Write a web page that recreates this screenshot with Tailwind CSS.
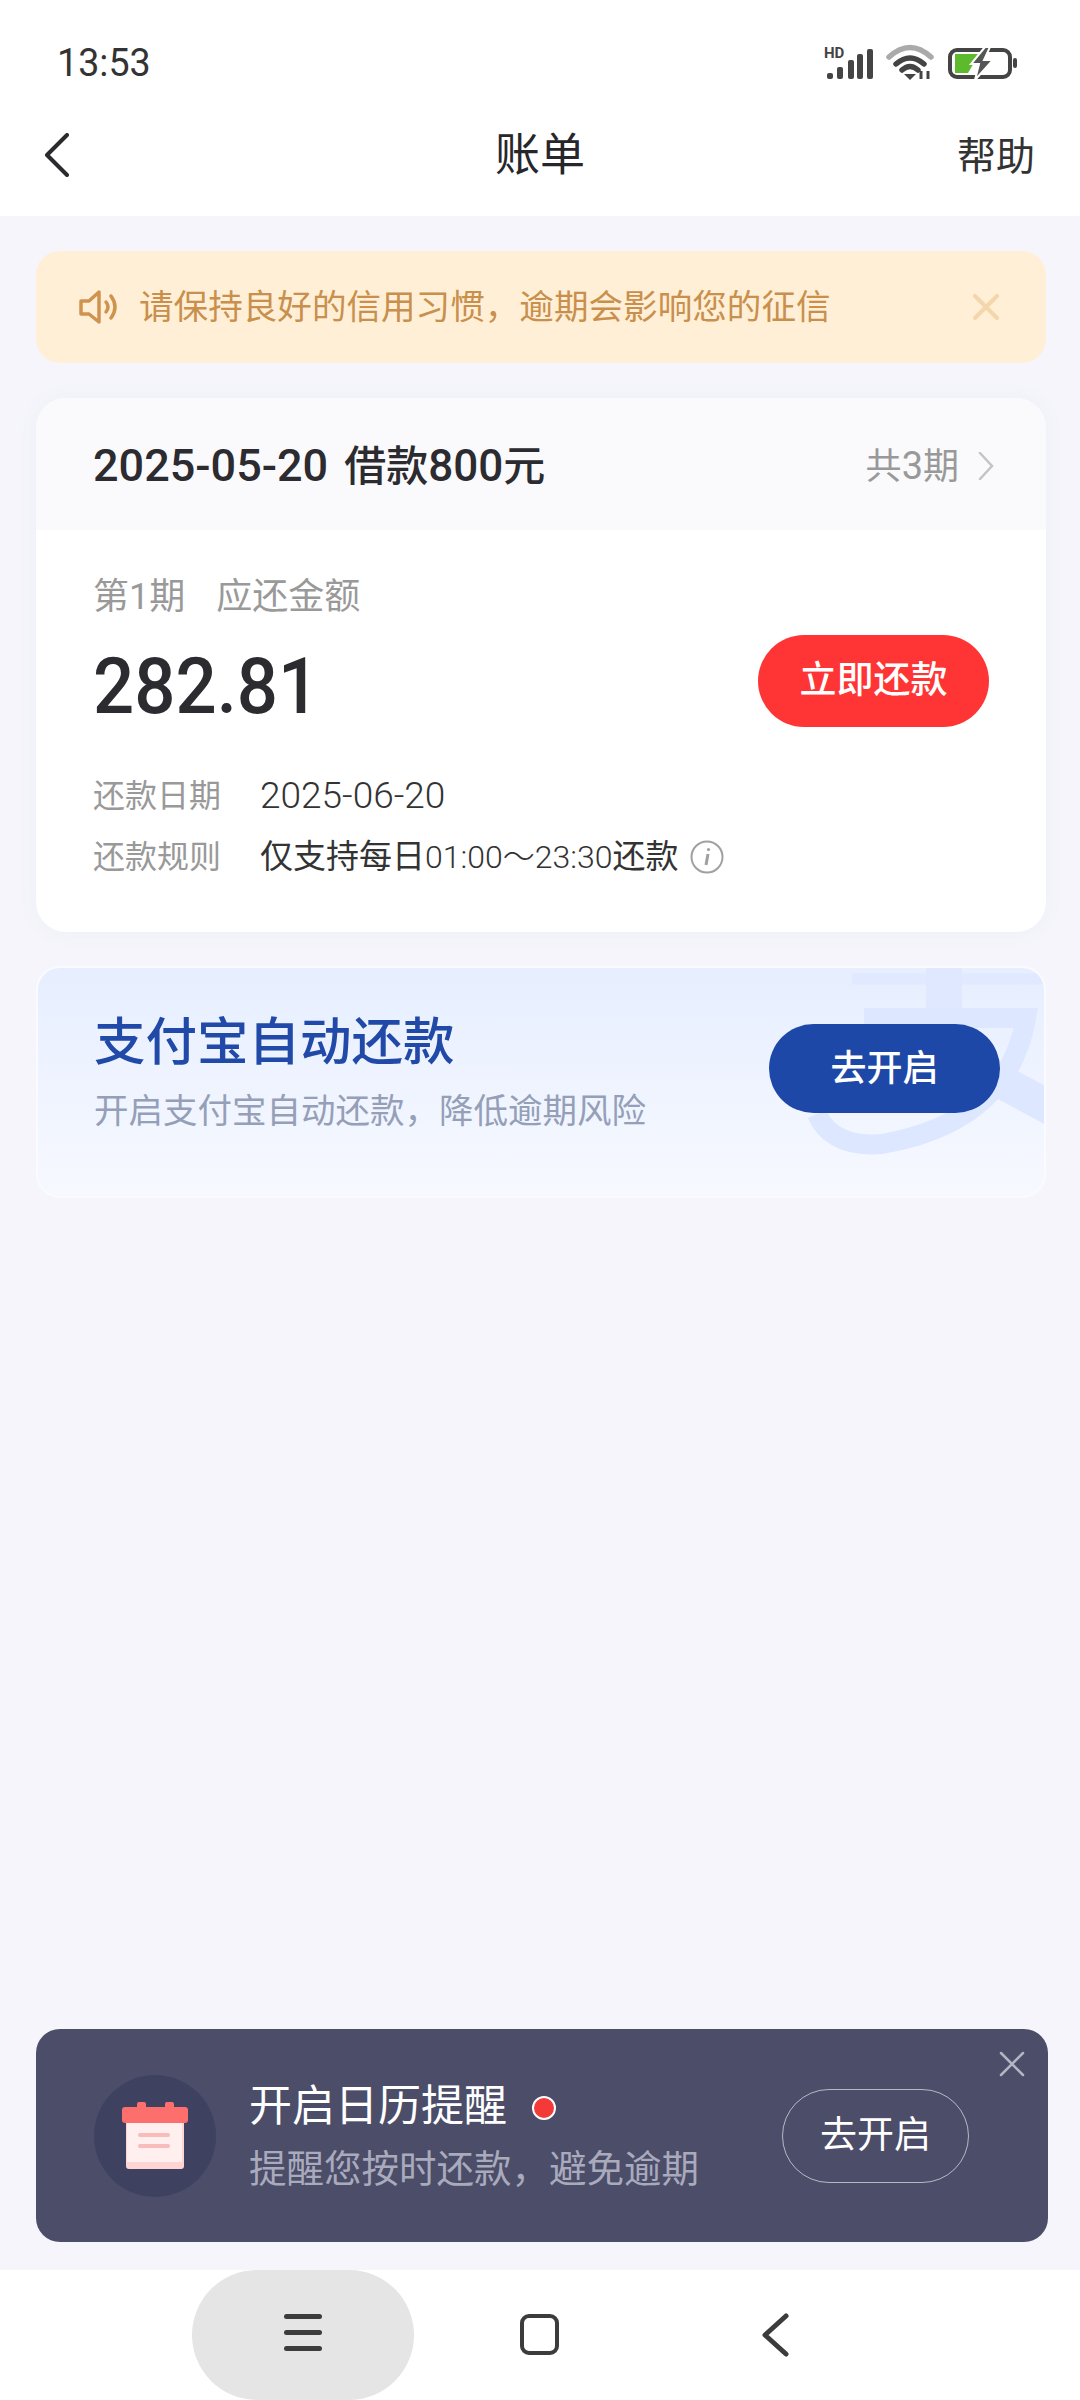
<!DOCTYPE html>
<html lang="zh-CN">
<head>
  <meta charset="UTF-8" />
  <meta name="viewport" content="width=device-width, initial-scale=1.0" />
  <title>账单</title>
  <script src="https://cdn.jsdelivr.net/npm/@tailwindcss/browser@4"></script>
</head>
<body class="bg-[#f5f5fb] font-['Roboto','Noto_Sans_CJK_SC',sans-serif]">
<div class="w-[1080px] h-[2400px] flex flex-col overflow-hidden">

  <!-- Status bar + title -->
  <header class="bg-white h-[216px] shrink-0">
    <div class="h-[100px] pl-[57px] pr-[62px] pt-[40px] flex justify-between items-start">
      <span class="text-[38px] leading-[46px] text-[#333] scale-x-[0.99] origin-left">13:53</span>
      <svg class="mt-[4px]" width="194" height="39" viewBox="824 44 194 39">
        <text x="824" y="58" font-size="15" font-weight="700" fill="#444" font-family="Roboto">HD</text>
        <g fill="#444">
          <rect x="827" y="73" width="6" height="6" rx="2" />
          <rect x="837" y="67" width="6" height="12" rx="2" />
          <rect x="848" y="60" width="6" height="19" rx="2" />
          <rect x="857" y="54" width="6" height="25" rx="2" />
          <rect x="867" y="49" width="6" height="30" rx="2" />
        </g>
        <g fill="none" stroke-linecap="round" stroke-width="5.5">
          <path d="M889 57 Q910 38 931 57" stroke="#aaa" />
          <path d="M896 64 Q910 52 924 64" stroke="#444" />
          <path d="M902 70 Q910 63 918 70" stroke="#444" />
        </g>
        <path d="M904 74 L916 74 L910 80 Z" fill="#444" />
        <path d="M921 71 V79 M928 71 V79" stroke="#444" stroke-width="3" />
        <rect x="950" y="50" width="60" height="27" rx="7" fill="none" stroke="#444" stroke-width="4" />
        <path d="M955 54 H979 L968 73 H955 Z" fill="#5cba2c" />
        <path d="M985 47 L971 64 H979 L975 80 L993 60 H984 L990 47 Z" fill="#555" stroke="#fff" stroke-width="2" />
        <rect x="1013" y="58" width="4" height="10" rx="2" fill="#444" />
      </svg>
    </div>
    <nav class="relative h-[116px] flex items-start justify-between pl-[44px] pr-[45px] pt-[12px]">
      <svg class="mt-[21px]" width="26" height="44" viewBox="0 0 26 44" fill="none" stroke="#2a2a2f" stroke-width="4" stroke-linecap="round" stroke-linejoin="round"><path d="M23 2 L3 22 L23 42" /></svg>
      <h1 class="absolute left-0 right-0 top-[24px] text-center text-[45px] leading-[64px] text-[#26262b]">账单</h1>
      <span class="mt-[15px] text-[39px] leading-[60px] text-[#333]">帮助</span>
    </nav>
  </header>

  <main class="flex-1 pl-[36px] pr-[34px] pt-[35px] flex flex-col gap-[35px]">
    <!-- Notice -->
    <div class="h-[112px] rounded-[24px] bg-[#ffefd6] flex items-center pl-[43px] pr-[46px] text-[#c98f4d]">
      <svg width="40" height="34" viewBox="0 0 40 34" fill="none" stroke="#cf9350" stroke-width="3.5" stroke-linejoin="round" stroke-linecap="round">
        <path d="M2 11 H10 L20 2 V32 L10 24 H2 Z" />
        <path d="M27 12 Q31 17 27 22" />
        <path d="M32 6 Q40 17 32 28" />
      </svg>
      <span class="ml-[20px] text-[34.6px] leading-[44px] flex-1 whitespace-nowrap">请保持良好的信用习惯，逾期会影响您的征信</span>
      <svg width="28" height="26" viewBox="0 0 28 26" fill="none" stroke="#f4d6aa" stroke-width="4" stroke-linecap="round"><path d="M3 2 L25 24 M25 2 L3 24" /></svg>
    </div>

    <!-- Bill card -->
    <section class="h-[534px] rounded-[30px] bg-white overflow-hidden shadow-[0_0_20px_rgba(120,120,170,0.05)]">
      <div class="h-[132px] bg-[#fafafd] pl-[57px] pr-[52px] pt-[4px] flex items-center justify-between">
        <h2 class="text-[42px] leading-[60px] font-medium text-[#2b2b30] whitespace-nowrap"><span class="text-[45px]">2025-05-20</span><span class="ml-[16px]">借款</span><span class="text-[44px]">800</span>元</h2>
        <div class="flex items-center gap-[19px] text-[36px] leading-[50px] text-[#999]">
          <span>共<span class="text-[38px]">3</span>期</span>
          <svg width="16" height="28" viewBox="0 0 16 28" fill="none" stroke="#c4c4c8" stroke-width="2.5" stroke-linecap="round"><path d="M2 1 L14 14 L2 27" /></svg>
        </div>
      </div>
      <div class="relative pl-[57px] pt-[42px]">
        <div class="text-[36px] leading-[50px] text-[#999] whitespace-pre">第<span>1</span>期<span class="ml-[31px]">应还金额</span></div>
        <div class="mt-[20px] text-[78px] leading-[90px] font-medium text-[#2b2b30] scale-x-[0.93] origin-left">282.81</div>
        <button class="absolute left-[722px] top-[105px] w-[231px] h-[92px] rounded-full bg-[#ff3535] text-white text-[37px] font-medium">立即还款</button>
        <div class="mt-[44px] flex items-center h-[40px]">
          <span class="w-[167px] text-[32px] text-[#999]">还款日期</span>
          <span class="text-[37px] font-light text-[#333]">2025-06-20</span>
        </div>
        <div class="mt-[21px] flex items-center h-[40px]">
          <span class="w-[167px] text-[32px] text-[#999]">还款规则</span>
          <span class="text-[33px] text-[#333] whitespace-nowrap">仅支持每日<span class="text-[32px] font-light">01:00～23:30</span>还款</span>
          <svg class="ml-[12px]" width="34" height="34" viewBox="0 0 34 34" fill="none" stroke="#a0a0a4" stroke-width="2"><circle cx="17" cy="17" r="15.5" /><path d="M18 14 L16 25" stroke-width="3" /><circle cx="18.5" cy="9.5" r="1.6" fill="#a0a0a4" stroke="none" /></svg>
        </div>
      </div>
    </section>

    <!-- Alipay auto repay -->
    <section class="relative h-[232px] -mt-px rounded-[24px] overflow-hidden border-2 border-[#fafbff] bg-gradient-to-b from-[#e6eeff] to-[#f7f9ff] pl-[56px] pt-[42px]">
      <svg class="absolute left-0 top-0" width="1010" height="232" viewBox="36 966 1010 232" fill="none" stroke="#dde7ff">
        <path d="M850 977 H1046" stroke-width="11" stroke="#e0e9ff" />
        <path d="M942 960 V1012" stroke-width="36" stroke="#dfe8ff" />
        <path d="M862 1016 H1024 Q1006 1120 880 1142 Q830 1146 815 1112" stroke-width="20" />
        <path d="M985 1072 L1060 1112" stroke-width="34" />
      </svg>
      <h2 class="relative text-[51.5px] leading-[66px] font-medium text-[#2149a8] whitespace-nowrap">支付宝自动还款</h2>
      <p class="relative mt-[11px] text-[34.5px] leading-[48px] text-[#959fb8] whitespace-nowrap">开启支付宝自动还款，降低逾期风险</p>
      <button class="absolute left-[731px] top-[56px] w-[231px] h-[89px] rounded-full bg-[#1e48a8] text-white text-[36px] font-medium">去开启</button>
    </section>
  </main>

  <!-- Calendar reminder -->
  <aside class="relative shrink-0 ml-[36px] mr-[32px] mb-[28px] h-[213px] rounded-[24px] bg-[#4b4d69] flex items-center pl-[58px]">
    <div class="w-[122px] h-[122px] rounded-full bg-[#3f4160] flex items-center justify-center">
      <svg width="66" height="68" viewBox="0 0 66 68">
        <rect x="4" y="14" width="58" height="53" rx="3" fill="#ffd4d2" />
        <rect x="5" y="18" width="55" height="42" fill="#fff0ef" />
        <rect x="15" y="0" width="9" height="10" rx="2" fill="#fd6f6d" />
        <rect x="43" y="0" width="9" height="10" rx="2" fill="#fd6f6d" />
        <path d="M3 5 H63 Q66 5 66 8 V18 Q66 21 63 21 H3 Q0 21 0 18 V8 Q0 5 3 5 Z" fill="#fd6f6d" />
        <rect x="16" y="31" width="32" height="4" rx="2" fill="#f8bcba" />
        <rect x="16" y="42" width="32" height="4" rx="2" fill="#f8bcba" />
      </svg>
    </div>
    <div class="ml-[33px]">
      <div class="flex items-center">
        <span class="text-[43px] leading-[56px] text-white whitespace-nowrap">开启日历提醒</span>
        <span class="ml-[25px] mt-[4px] w-[24px] h-[24px] rounded-full bg-[#f33a38] border-2 border-white"></span>
      </div>
      <p class="mt-[10px] text-[37.5px] leading-[50px] text-[#a9aabc] whitespace-nowrap">提醒您按时还款，避免逾期</p>
    </div>
    <button class="absolute left-[746px] top-[60px] w-[187px] h-[94px] rounded-full border border-white/60 text-white text-[37px]">去开启</button>
    <svg class="absolute right-[23px] top-[22px]" width="26" height="26" viewBox="0 0 26 26" fill="none" stroke="#b4b5c4" stroke-width="2.5" stroke-linecap="round"><path d="M2 2 L24 24 M24 2 L2 24" /></svg>
  </aside>

  <!-- System navigation -->
  <footer class="relative shrink-0 h-[130px] bg-white">
    <div class="absolute left-[192px] top-0 w-[222px] h-[130px] rounded-full bg-[#e5e5e5]"></div>
    <div class="absolute left-[284px] top-[44px] w-[38px] flex flex-col gap-[11px]">
      <i class="block h-[5px] rounded-full bg-[#3c3c3c]"></i>
      <i class="block h-[5px] rounded-full bg-[#3c3c3c]"></i>
      <i class="block h-[5px] rounded-full bg-[#3c3c3c]"></i>
    </div>
    <div class="absolute left-[520px] top-[44px] w-[39px] h-[41px] rounded-[9px] border-[4px] border-[#3c3c3c]"></div>
    <svg class="absolute left-[760px] top-[43px]" width="30" height="44" viewBox="0 0 30 44" fill="none" stroke="#3c3c3c" stroke-width="5" stroke-linecap="round" stroke-linejoin="round"><path d="M26 3 L5 22 L26 41" /></svg>
  </footer>
</div>
</body>
</html>
